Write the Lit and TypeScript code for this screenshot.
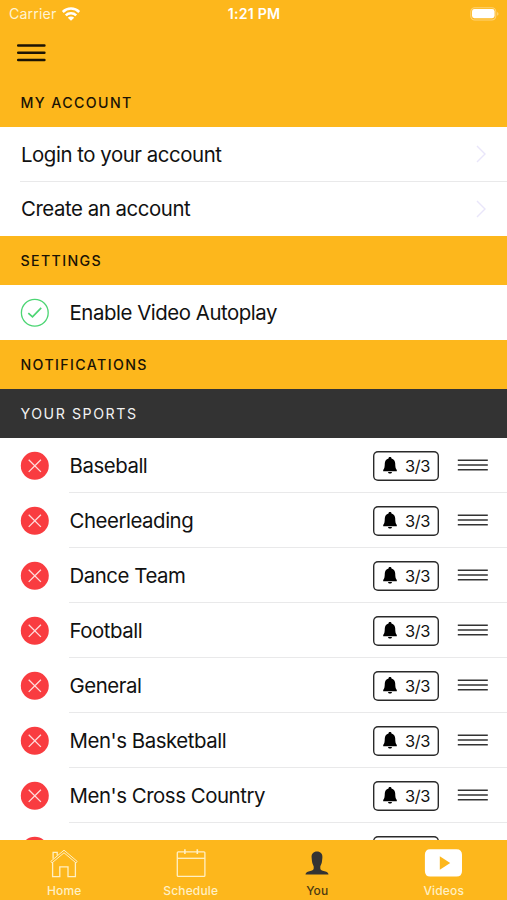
import { LitElement, html, css, svg, nothing } from "lit";
import { customElement } from "lit/decorators.js";

const SPORTS = [
  { name: "Baseball", count: "3/3" },
  { name: "Cheerleading", count: "3/3" },
  { name: "Dance Team", count: "3/3" },
  { name: "Football", count: "3/3" },
  { name: "General", count: "3/3" },
  { name: "Men's Basketball", count: "3/3" },
  { name: "Men's Cross Country", count: "3/3" },
  { name: "", count: "" },
];

const wifi = html`<svg width="18" height="14" viewBox="0 0 18 14" fill="none" stroke="#fff" stroke-width="2.5">
  <path d="M.8 5A11.6 11.6 0 0 1 17.2 5" />
  <path d="M3.8 8.3A7.4 7.4 0 0 1 14.2 8.3" />
  <path d="M9 13.8L5.8 10.7A4.6 4.6 0 0 1 12.2 10.7Z" fill="#fff" stroke="none" />
</svg>`;

const battery = html`<svg width="29" height="14" viewBox="0 0 29 14">
  <rect x="0.8" y="0.8" width="25" height="12.2" rx="4" fill="none" stroke="#fff" stroke-opacity=".4" stroke-width="1.1" />
  <rect x="2" y="2" width="22.6" height="9.2" rx="2.4" fill="#fff" />
  <path d="M27.2 5C28.9 5.8 28.9 8 27.2 8.8Z" fill="#fff" fill-opacity=".45" />
</svg>`;

const menu = html`<svg width="30" height="20" viewBox="0 0 30 20" stroke="#1c1404" stroke-width="2.5" stroke-linecap="round">
  <path d="M2.2 2.6H28.4M2.2 9.8H28.4M2.2 17H28.4" />
</svg>`;

const chevron = html`<svg width="12" height="20" viewBox="0 0 12 20" fill="none" stroke="#e9e6fa" stroke-width="1.4">
  <path d="M2 1.9L10 10L2 18.1" />
</svg>`;

const check = html`<svg width="29" height="29" viewBox="0 0 29 29" fill="none" stroke="#4cd573">
  <circle cx="14.8" cy="14.7" r="13.4" stroke-width="1.3" />
  <path d="M8.3 15.1L12.5 18.9L21.2 9.9" stroke-width="1.7" />
</svg>`;

const remove = html`<svg width="29" height="29" viewBox="0 0 29 29">
  <circle cx="14.8" cy="14.8" r="14" fill="#f93c40" />
  <path d="M8.7 8.7L20.9 20.9M20.9 8.7L8.7 20.9" stroke="#ffdcdc" stroke-width="1.3" />
</svg>`;

const bell = html`<svg width="14" height="17" viewBox="0 0 14 17" fill="#000">
  <path d="M7 .1C7.9 .1 8.4 .6 8.5 1.4C10.9 2 12.1 3.9 12.2 6.3C12.3 9.8 12.5 11.6 13.8 13.1V14.2H.2V13.1C1.5 11.6 1.7 9.8 1.8 6.3C1.9 3.9 3.1 2 5.5 1.4C5.6 .6 6.1 .1 7 .1Z" />
  <path d="M5 14.9H9C8.8 16 8.1 16.6 7 16.6C5.9 16.6 5.2 16 5 14.9Z" />
</svg>`;

const grip = html`<svg width="31" height="13" viewBox="0 0 31 13" stroke="#333" stroke-width="1.5">
  <path d="M.8 1.2H30.8M.8 6H30.8M.8 10.8H30.8" />
</svg>`;

const home = svg`
  <g fill="none" stroke="#fff0c4" stroke-width="1.3">
    <path d="M4.6 14.4V28.6H11.8V18.9H20V28.6H27.4V14.4" />
    <path d="M2.8 13.4L16 2.2L29.2 13.4L28 14.9L16 4.8L4 14.9Z" stroke-width="1" />
    <path d="M5.1 10.8V4.4H9.2V7.4" />
  </g>`;

const schedule = svg`
  <g fill="none" stroke="#fff0c4" stroke-width="1.3">
    <rect x="2.3" y="3.8" width="27.6" height="24.6" rx="1" />
    <path d="M2.3 10.3H29.9" />
    <path d="M9.9 1.2V6M22.3 1.2V6" stroke-width="1.6" />
  </g>`;

const person = svg`
  <path fill="#333" d="M16 3.5C19.6 3.5 21.7 5.9 21.4 9.4L21 13.2C20.8 15.7 19.6 17 19.3 18.6V20.4C19.4 22.2 22 22.8 24.5 23.5C26.6 24.2 27.3 25 27.5 26.5H4.5C4.7 25 5.4 24.2 7.5 23.5C10 22.8 12.6 22.2 12.7 20.4V18.6C12.4 17 11.2 15.7 11 13.2L10.6 9.4C10.3 5.9 12.4 3.5 16 3.5Z" />`;

const video = svg`
  <path fill="#fff" fill-rule="evenodd" d="M5 1.2H31.5Q37 1.2 37 6.8V22.9Q37 28.5 31.5 28.5H5.2Q-.1 28.5 -.1 22.9V6.8Q-.1 1.2 5.2 1.2ZM14.8 8.2V21.8L25.2 15Z" />`;

const TABS = [
  { label: "Home", icon: home, w: 32, active: false },
  { label: "Schedule", icon: schedule, w: 32, active: false },
  { label: "You", icon: person, w: 32, active: true },
  { label: "Videos", icon: video, w: 37, active: false },
];

@customElement("app-root")
export class AppRoot extends LitElement {
  static styles = css`
    :host {
      display: flex;
      flex-direction: column;
      height: 900px;
      overflow: hidden;
      background: #fff;
      color: #111;
      font-family: Inter, "Liberation Sans", sans-serif;
    }
    svg { display: block; flex: none; overflow: visible; }
    .status {
      flex: none;
      display: grid;
      grid-template-columns: 1fr auto 1fr;
      align-items: center;
      height: 27px;
      padding: 0 8px 0 9px;
      background: #fdb71c;
      color: #fff;
    }
    .carrier {
      display: flex;
      align-items: center;
      gap: 6px;
      color: #fff3d2;
      font-size: 14.2px;
      letter-spacing: 0.12px;
    }
    .time { font-weight: 600; font-size: 14.2px; letter-spacing: 0.2px; }
    .battery { justify-self: end; }
    .nav { flex: none; height: 51px; padding: 16px 0 0 16px; box-sizing: border-box; background: #fdb71c; }
    .heading {
      flex: none;
      display: flex;
      align-items: center;
      height: 49px;
      padding: 0 20.5px;
      box-sizing: border-box;
      background: #fdb71c;
      color: #1a1305;
      font-size: 14.2px;
      font-weight: 500;
      letter-spacing: 1.38px;
    }
    .dark {
      height: 49.5px;
      background: #333;
      color: #f2f2f2;
      font-weight: 400;
      letter-spacing: 1.55px;
    }
    .list { flex: none; display: flex; flex-direction: column; }
    .row {
      display: flex;
      align-items: center;
      height: 54.5px;
      padding-left: 20px;
      box-sizing: border-box;
      font-size: 20.4px;
      letter-spacing: -0.45px;
    }
    .body {
      flex: 1;
      display: flex;
      align-items: center;
      justify-content: space-between;
      height: 100%;
      box-sizing: border-box;
      padding: 1px 20px 0 1px;
      border-bottom: 1px solid #e9e9ea;
    }
    .sport, .toggle { gap: 20px; }
    .sport { height: 55px; }
    .sport .body, .toggle .body { padding-left: 0.5px; padding-right: 19px; }
    .last .body { border-bottom: 0; padding-top: 0; }
    .actions { display: flex; align-items: center; gap: 18px; }
    .badge {
      display: flex;
      align-items: center;
      gap: 8px;
      width: 66px;
      height: 30px;
      padding-left: 10px;
      box-sizing: border-box;
      border-radius: 5px;
      box-shadow: inset 0 0 0 1.4px #2a2a2a;
      font-size: 16.4px;
      letter-spacing: -0.4px;
    }
    .scroll { flex: 1; min-height: 0; overflow: hidden; }
    .tabs {
      flex: none;
      display: grid;
      grid-template-columns: repeat(4, 1fr);
      height: 60px;
      padding-left: 1px;
      background: #fdb71c;
    }
    .tab {
      display: flex;
      flex-direction: column;
      align-items: center;
      padding-top: 8px;
      gap: 5px;
      color: #fff0c4;
      font-size: 12px;
      line-height: 15px;
      font-weight: 500;
      letter-spacing: 0.15px;
    }
    .active { color: #4b3a12; }
  `;

  render() {
    return html`
      <header class="status">
        <span class="carrier">Carrier ${wifi}</span>
        <span class="time">1:21 PM</span>
        <span class="battery">${battery}</span>
      </header>
      <div class="nav">${menu}</div>
      <div class="heading">MY ACCOUNT</div>
      <div class="list">
        <div class="row"><div class="body"><span>Login to your account</span>${chevron}</div></div>
        <div class="row last"><div class="body"><span>Create an account</span>${chevron}</div></div>
      </div>
      <div class="heading">SETTINGS</div>
      <div class="row toggle last">${check}<div class="body"><span>Enable Video Autoplay</span></div></div>
      <div class="heading">NOTIFICATIONS</div>
      <div class="heading dark">YOUR SPORTS</div>
      <div class="scroll">
        ${SPORTS.map(
          ({ name, count }) => html`<div class="row sport">
            ${remove}
            <div class="body">
              <span>${name || nothing}</span>
              <div class="actions"><span class="badge">${bell}${count || nothing}</span>${grip}</div>
            </div>
          </div>`
        )}
      </div>
      <nav class="tabs">
        ${TABS.map(
          (t) => html`<div class="tab ${t.active ? "active" : ""}">
            <svg width=${t.w} height="30" viewBox="0 0 ${t.w} 30">${t.icon}</svg>
            <span>${t.label}</span>
          </div>`
        )}
      </nav>
    `;
  }
}
